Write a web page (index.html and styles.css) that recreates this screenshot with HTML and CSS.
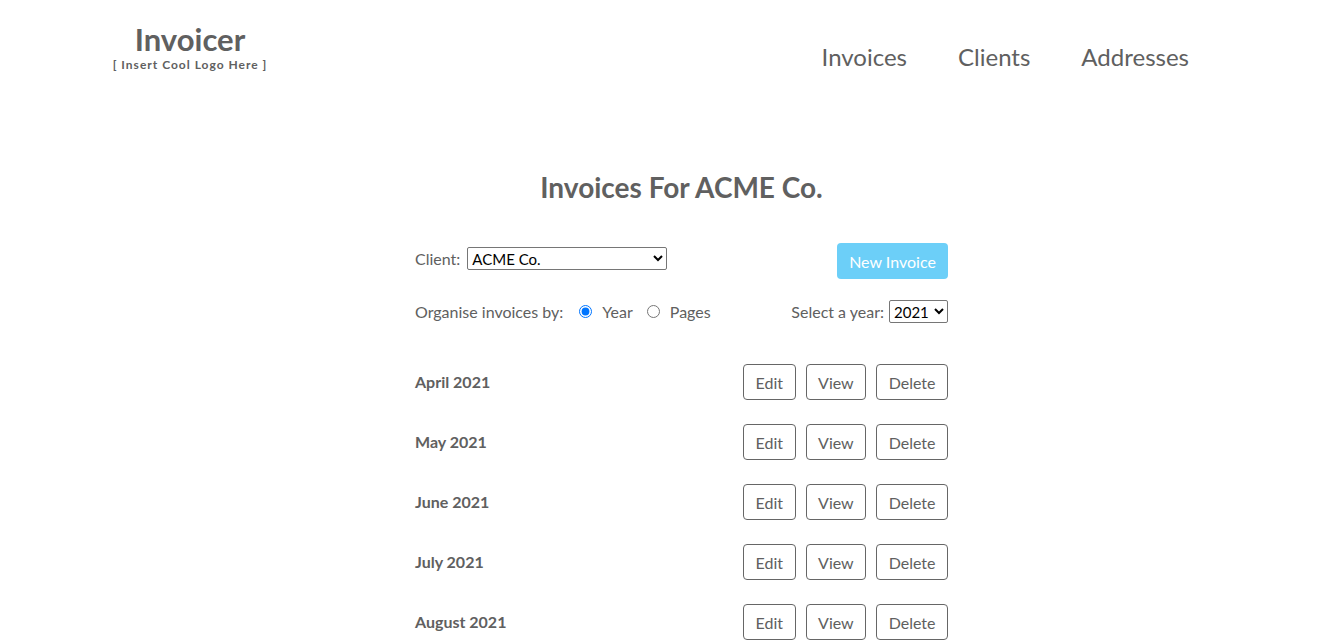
FILE: index.html
```html
<!DOCTYPE html>
<html lang="en">
<head>
<meta charset="utf-8">
<title>Invoicer</title>
<link rel="stylesheet" href="styles.css">
</head>
<body>
<header class="site-header">
  <div class="brand">
    <div class="brand-name">Invoicer</div>
    <div class="brand-sub">[ Insert Cool Logo Here ]</div>
  </div>
  <nav class="nav">
    <a href="#" class="nav-link">Invoices</a>
    <a href="#" class="nav-link">Clients</a>
    <a href="#" class="nav-link">Addresses</a>
  </nav>
</header>
<main class="content">
  <h1 class="page-title">Invoices For ACME Co.</h1>
  <div class="toolbar">
    <label class="field field-client">Client:
      <select class="client-select"><option>ACME Co.</option></select>
    </label>
    <button class="btn-primary">New Invoice</button>
  </div>
  <div class="toolbar toolbar-second">
    <div class="field">Organise invoices by:
      <label class="radio"><input type="radio" name="org" checked>Year</label>
      <label class="radio"><input type="radio" name="org">Pages</label>
    </div>
    <label class="field">Select a year:
      <select class="year-select"><option>2021</option></select>
    </label>
  </div>
  <ul class="invoice-list">
    <li class="invoice-row"><span class="month">April 2021</span><span class="actions"><button class="btn">Edit</button><button class="btn">View</button><button class="btn">Delete</button></span></li>
    <li class="invoice-row"><span class="month">May 2021</span><span class="actions"><button class="btn">Edit</button><button class="btn">View</button><button class="btn">Delete</button></span></li>
    <li class="invoice-row"><span class="month">June 2021</span><span class="actions"><button class="btn">Edit</button><button class="btn">View</button><button class="btn">Delete</button></span></li>
    <li class="invoice-row"><span class="month">July 2021</span><span class="actions"><button class="btn">Edit</button><button class="btn">View</button><button class="btn">Delete</button></span></li>
    <li class="invoice-row"><span class="month">August 2021</span><span class="actions"><button class="btn">Edit</button><button class="btn">View</button><button class="btn">Delete</button></span></li>
  </ul>
</main>
</body>
</html>
```
FILE: styles.css
```css
* { box-sizing: border-box; }
body {
  margin: 0;
  font-family: Lato, "Open Sans", sans-serif;
  color: #606060;
  background: #fff;
}
.site-header {
  display: flex;
  justify-content: space-between;
  align-items: flex-start;
  padding: 21px 155px 0 111px;
  height: 140px;
}
.brand {
  width: 158px;
  text-align: center;
}
.brand-name {
  font-size: 31px;
  font-weight: 700;
  line-height: 37px;
}
.brand-sub {
  font-size: 12px;
  font-weight: 700;
  line-height: 14px;
  letter-spacing: 1px;
  white-space: nowrap;
}
.nav {
  display: flex;
  gap: 51px;
  padding-top: 21px;
}
.nav-link {
  font-size: 24px;
  line-height: 30px;
  color: #606060;
  text-decoration: none;
}
.content {
  width: 533px;
  margin-left: calc(50% - 257px);
}
.page-title {
  margin: 27px 0 0;
  text-align: center;
  font-size: 28px;
  font-weight: 700;
  line-height: 40px;
}
.toolbar {
  display: flex;
  justify-content: space-between;
  align-items: flex-start;
  margin-top: 36px;
  font-size: 16px;
}
.field-client {
  margin-top: 4px;
}
.toolbar-second {
  margin-top: 21px;
  align-items: center;
}
.field {
  display: flex;
  align-items: center;
}
.client-select {
  margin-left: 7px;
  width: 200px;
  height: 23px;
  font-family: inherit;
  font-size: 15px;
  color: #000;
  border: 1px solid #767676;
  border-radius: 2px;
  background: #fff;
}
.year-select {
  margin-left: 5px;
  width: 59px;
  height: 23px;
  font-family: inherit;
  font-size: 15px;
  color: #000;
  border: 1px solid #767676;
  border-radius: 2px;
  background: #fff;
}
.radio {
  display: flex;
  align-items: center;
  margin-left: 16px;
}
.radio input {
  margin: 0 10px 0 0;
  width: 13px;
  height: 13px;
}
.radio + .radio { margin-left: 14px; }
.btn-primary {
  height: 36px;
  width: 111px;
  border: none;
  border-radius: 4px;
  background: #6ccff8;
  color: #fff;
  font-family: inherit;
  font-size: 16px;
}
.invoice-list {
  list-style: none;
  margin: 41px 0 0;
  padding: 0;
}
.invoice-row {
  display: flex;
  justify-content: space-between;
  align-items: center;
  height: 36px;
  margin-bottom: 24px;
}
.month {
  font-weight: 700;
  font-size: 16px;
  margin-top: -1px;
}
.actions {
  display: flex;
  gap: 10px;
}
.btn {
  height: 36px;
  padding: 0 11.5px;
  border: 1px solid #666;
  border-radius: 4px;
  background: #fff;
  color: #606060;
  font-family: inherit;
  font-size: 16px;
}
```
